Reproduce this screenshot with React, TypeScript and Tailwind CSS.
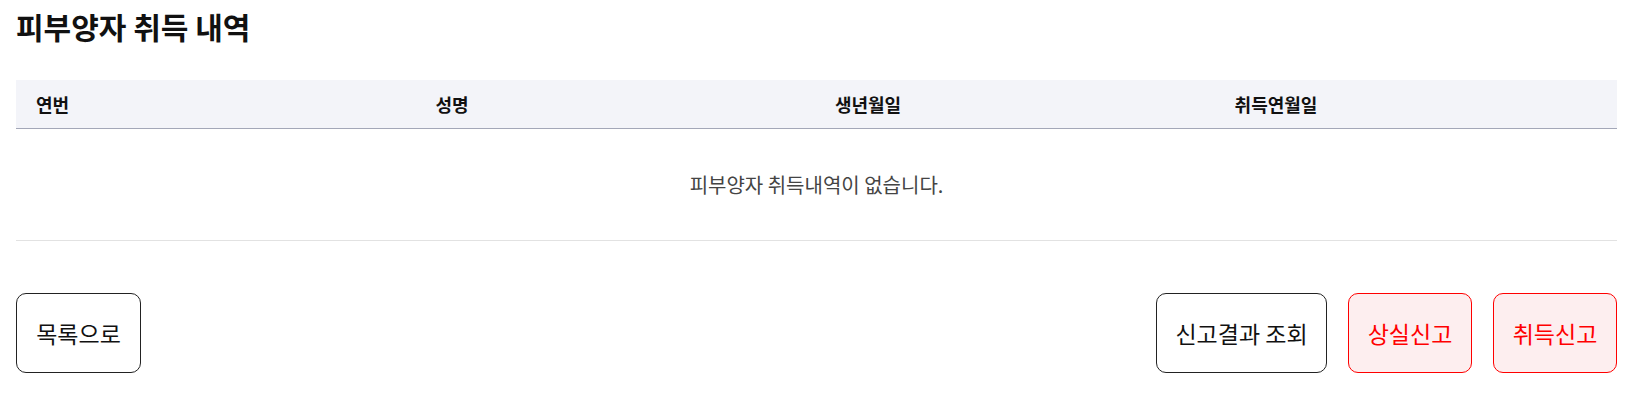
import React from "react";

const font = { fontFamily: '"Noto Sans CJK KR", "Noto Sans", sans-serif' };

export default function App() {
  return (
    <div className="w-[1633px] h-[399px] bg-white px-[16px] pt-[8px]" style={font}>
      <h1 className="text-[30px] leading-[36px] font-bold text-[#111]">피부양자 취득 내역</h1>

      <div className="mt-[36px]">
        <div className="grid grid-cols-[231px_410px_422px_394px_1fr] h-[49px] items-center bg-[#f3f4f9] border-b border-[#a3a7b8] text-[18px] font-bold text-[#111]">
          <div className="pl-[20px]">연번</div>
          <div className="text-center">성명</div>
          <div className="text-center">생년월일</div>
          <div className="text-center">취득연월일</div>
          <div />
        </div>
        <div className="h-[112px] flex items-center justify-center border-b border-[#e2e2e2] text-[20px] text-[#444]">
          피부양자 취득내역이 없습니다.
        </div>
      </div>

      <div className="mt-[52px] flex items-center justify-between">
        <button className="h-[80px] w-[125px] rounded-[10px] border border-[#222] bg-white text-[23px] text-[#111]">
          목록으로
        </button>
        <div className="flex gap-[21px]">
          <button className="h-[80px] w-[171px] rounded-[10px] border border-[#222] bg-white text-[23px] text-[#111]">
            신고결과 조회
          </button>
          <button className="h-[80px] w-[124px] rounded-[10px] border border-[#f00] bg-[#fdeeef] text-[23px] text-[#f00]">
            상실신고
          </button>
          <button className="h-[80px] w-[124px] rounded-[10px] border border-[#f00] bg-[#fdeeef] text-[23px] text-[#f00]">
            취득신고
          </button>
        </div>
      </div>
    </div>
  );
}
